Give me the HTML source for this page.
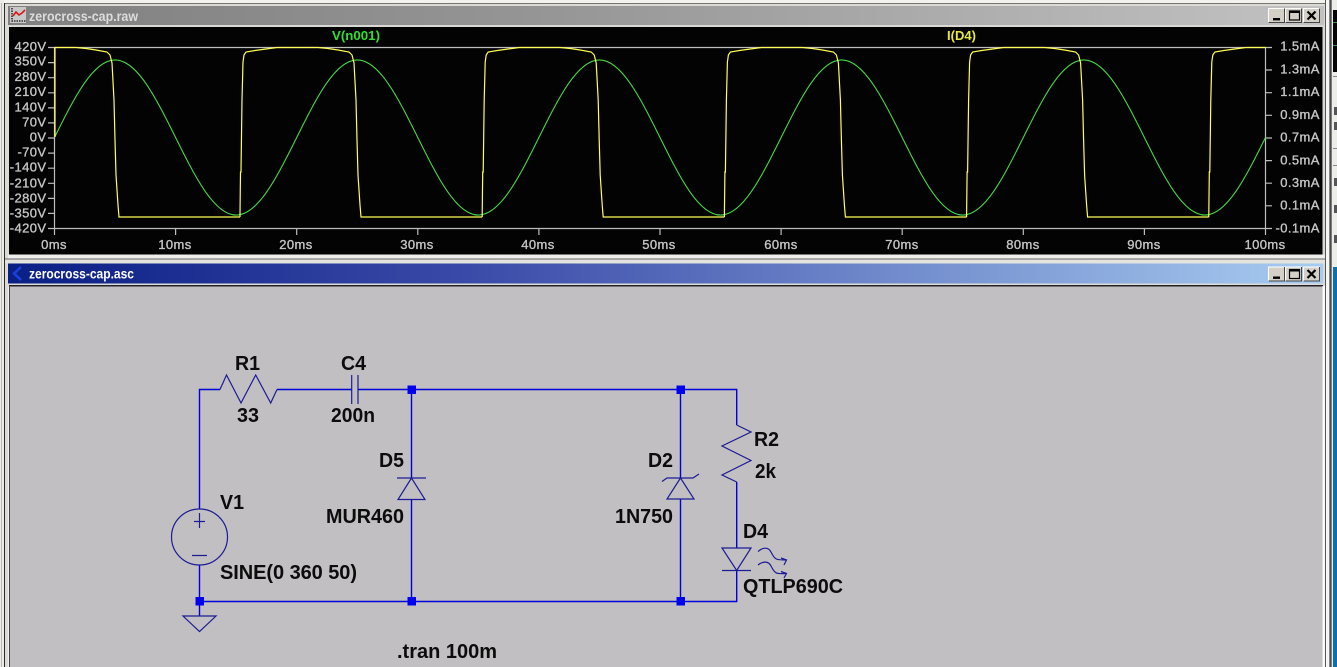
<!DOCTYPE html>
<html>
<head>
<meta charset="utf-8">
<style>
html,body{margin:0;padding:0;background:#d4d0c8;width:1337px;height:667px;overflow:hidden}
svg{display:block;position:absolute;left:0;top:0}
text{font-family:"Liberation Sans",Arial,sans-serif}
.ax{font-size:13px;fill:#c4c4c4;stroke:#c4c4c4;stroke-width:.35;letter-spacing:.4px}
.sc{font-size:20px;font-weight:bold;fill:#0c0c0c}
.w{fill:none;stroke:#0000d8;stroke-width:1.4}
.c{fill:none;stroke:#1c1c96;stroke-width:1.2}
.j{fill:#0000f0}
.g{fill:none;stroke:#bdbdbd;stroke-width:1.2}
</style>
</head>
<body>
<svg width="1337" height="667" viewBox="0 0 1337 667" xmlns="http://www.w3.org/2000/svg">
<defs>
<linearGradient id="tg1" x1="0" x2="1" y1="0" y2="0"><stop offset="0" stop-color="#808080"/><stop offset=".4" stop-color="#959595"/><stop offset="1" stop-color="#c2c2c2"/></linearGradient>
<linearGradient id="tg2" x1="0" x2="1" y1="0" y2="0"><stop offset="0" stop-color="#0a1f84"/><stop offset=".35" stop-color="#3a4aa8"/><stop offset="1" stop-color="#a8ccf0"/></linearGradient>
<clipPath id="pc"><rect x="54" y="30" width="1211.5" height="200"/></clipPath>
<g id="btns">
<g id="b1"><rect x="0.5" y="0.5" width="16" height="14" fill="#d4d0c8" stroke="#fff"/><path d="M16.5,0.5V14.5H0.5" fill="none" stroke="#444"/></g>
<use href="#b1" x="17"/><use href="#b1" x="35"/>
<rect x="5" y="10" width="7" height="2.4" fill="#000"/>
<rect x="21.5" y="3" width="10" height="9" fill="none" stroke="#000" stroke-width="1.2"/><rect x="21.5" y="3" width="10" height="2" fill="#000"/>
<path d="M39.5,3.5L47.5,11.5M47.5,3.5L39.5,11.5" stroke="#000" stroke-width="2.2"/>
</g>
<path id="yel" fill="none" stroke="#ffff55" stroke-width="1.2" d="M240,217L240,214L240.5,172L241,172L242,100L243,62L244,55L246,52L255,50.5L266,49L277,47.5L318,47.5L328,48.5L338,50L349,52L352,55L354,63L356,100L357,140L358,175L360,205L361,217L482.2,217"/>
</defs>

<!-- desktop edges -->
<rect x="0" y="0" width="1337" height="667" fill="#dcdad4"/>
<rect x="0" y="0" width="1337" height="3" fill="#f2f2ee"/>
<rect x="4" y="3" width="1326" height="1" fill="#77756f"/>
<rect x="4" y="3" width="1" height="664" fill="#2a2a2a"/>
<rect x="0" y="0" width="4" height="667" fill="#ecebe6"/>
<rect x="1" y="3" width="1" height="664" fill="#bbb"/>
<rect x="1325" y="0" width="1" height="667" fill="#555"/>
<rect x="1326" y="0" width="3" height="667" fill="#f6f6f4"/>
<rect x="1329" y="0" width="1.5" height="667" fill="#888"/>
<rect x="1330.5" y="0" width="1" height="667" fill="#111"/>
<rect x="1331.5" y="0" width="5.5" height="667" fill="#ecece8"/>
<rect x="1333" y="10" width="4" height="62" fill="#050505"/>
<rect x="1333" y="22" width="4" height="1" fill="#4a8a4a"/>
<rect x="1333" y="45" width="4" height="1" fill="#4a8a4a"/>
<rect x="1333" y="76" width="4" height="1" fill="#888"/>
<rect x="1333" y="148" width="4" height="1" fill="#888"/>
<rect x="1333" y="165" width="4" height="1" fill="#888"/>
<rect x="1334" y="107" width="3" height="8" fill="#555"/>
<rect x="1334" y="122" width="3" height="8" fill="#555"/>
<rect x="1334" y="178" width="3" height="8" fill="#555"/>
<rect x="1334" y="205" width="3" height="8" fill="#555"/>
<rect x="1334" y="235" width="3" height="8" fill="#555"/>
<rect x="1333" y="267" width="4" height="400" fill="#0f6eae"/>

<!-- plot window -->
<rect x="8" y="6" width="1316" height="20" fill="url(#tg1)"/>
<rect x="8" y="25" width="1316" height="2" fill="#d8d8d4"/>
<rect x="9" y="27" width="1313.5" height="227.5" fill="#030303"/>
<rect x="8" y="254.5" width="1317" height="4" fill="#eeeeea"/>
<rect x="5" y="258.5" width="1320" height="1" fill="#666"/>
<rect x="5" y="259.5" width="1320" height="4" fill="#e4e3de"/>

<!-- plot icon -->
<rect x="10" y="7" width="16" height="16" fill="#c8c8c8"/>
<path d="M12,8V21H26" fill="none" stroke="#111" stroke-width="1.3" stroke-dasharray="1.5 1"/>
<path d="M13,16L16,12L19,15L22,13L25,10" fill="none" stroke="#d81818" stroke-width="1.6"/>
<text x="29" y="21" font-size="14" font-weight="bold" fill="#dcdcdc" textLength="109" lengthAdjust="spacingAndGlyphs">zerocross-cap.raw</text>
<use href="#btns" x="1268" y="8"/>

<!-- axes -->
<path class="g" d="M54.5,47.5H1265.5V228.5H54.5Z"/>
<path class="g" d="M48,47.5H54M48,62.6H54M48,77.7H54M48,92.8H54M48,107.9H54M48,122.9H54M48,138H54M48,153.1H54M48,168.2H54M48,183.3H54M48,198.4H54M48,213.4H54M48,228.5H54"/>
<path class="g" d="M1265,47.5H1272M1265,70H1272M1265,92.7H1272M1265,115.3H1272M1265,138H1272M1265,160.6H1272M1265,183.2H1272M1265,205.8H1272M1265,228.5H1272"/>
<path class="g" d="M54.5,228V235M175.6,228V235M296.7,228V235M417.8,228V235M538.9,228V235M660,228V235M781.1,228V235M902.2,228V235M1023.3,228V235M1144.4,228V235M1265.5,228V235"/>

<g class="ax" text-anchor="end">
<text x="46.5" y="51">420V</text>
<text x="46.5" y="65.7">350V</text>
<text x="46.5" y="81">280V</text>
<text x="46.5" y="96">210V</text>
<text x="46.5" y="111.7">140V</text>
<text x="46.5" y="126.7">70V</text>
<text x="46.5" y="141.7">0V</text>
<text x="46.5" y="156.7">-70V</text>
<text x="46.5" y="171.7">-140V</text>
<text x="46.5" y="187.3">-210V</text>
<text x="46.5" y="202.7">-280V</text>
<text x="46.5" y="217.7">-350V</text>
<text x="46.5" y="232.7">-420V</text>
</g>
<g class="ax" text-anchor="end">
<text x="1319.8" y="50.7">1.5mA</text>
<text x="1319.8" y="73.5">1.3mA</text>
<text x="1319.8" y="96">1.1mA</text>
<text x="1319.8" y="119">0.9mA</text>
<text x="1319.8" y="141.7">0.7mA</text>
<text x="1319.8" y="164.3">0.5mA</text>
<text x="1319.8" y="187">0.3mA</text>
<text x="1319.8" y="209.7">0.1mA</text>
<text x="1319.8" y="232.7">-0.1mA</text>
</g>
<g class="ax" text-anchor="middle">
<text x="54" y="249">0ms</text>
<text x="175" y="249">10ms</text>
<text x="296" y="249">20ms</text>
<text x="417" y="249">30ms</text>
<text x="538" y="249">40ms</text>
<text x="659" y="249">50ms</text>
<text x="781" y="249">60ms</text>
<text x="902" y="249">70ms</text>
<text x="1023" y="249">80ms</text>
<text x="1144" y="249">90ms</text>
<text x="1265" y="249">100ms</text>
</g>
<text x="332" y="40" font-size="13" font-weight="bold" fill="#30e030" textLength="48" lengthAdjust="spacingAndGlyphs">V(n001)</text>
<text x="947" y="40" font-size="13" font-weight="bold" fill="#e8e840" textLength="29" lengthAdjust="spacingAndGlyphs">I(D4)</text>

<!-- traces -->
<g clip-path="url(#pc)">
<path fill="none" stroke="#48d848" stroke-width="1.1" d="M54.5,137.5
c19.75,-39.75 38.64,-77.6 60.55,-77.6 c21.91,0 40.8,37.85 60.55,77.6 c19.75,39.75 38.64,77.6 60.55,77.6 c21.91,0 40.8,-37.85 60.55,-77.6
c19.75,-39.75 38.64,-77.6 60.55,-77.6 c21.91,0 40.8,37.85 60.55,77.6 c19.75,39.75 38.64,77.6 60.55,77.6 c21.91,0 40.8,-37.85 60.55,-77.6
c19.75,-39.75 38.64,-77.6 60.55,-77.6 c21.91,0 40.8,37.85 60.55,77.6 c19.75,39.75 38.64,77.6 60.55,77.6 c21.91,0 40.8,-37.85 60.55,-77.6
c19.75,-39.75 38.64,-77.6 60.55,-77.6 c21.91,0 40.8,37.85 60.55,77.6 c19.75,39.75 38.64,77.6 60.55,77.6 c21.91,0 40.8,-37.85 60.55,-77.6
c19.75,-39.75 38.64,-77.6 60.55,-77.6 c21.91,0 40.8,37.85 60.55,77.6 c19.75,39.75 38.64,77.6 60.55,77.6 c21.91,0 40.8,-37.85 60.55,-77.6"/>
<path fill="none" stroke="#ffff55" stroke-width="1.2" d="M55,137L55,47.5L76,47.5L86,48.5L96,50L107,52L110,55L112,63L114,100L115,140L116,175L118,205L119,217L240,217"/>
<use href="#yel"/>
<use href="#yel" x="242.2"/>
<use href="#yel" x="484.4"/>
<use href="#yel" x="726.6"/>
<use href="#yel" x="968.8"/>
</g>

<!-- schematic window -->
<rect x="8" y="263.5" width="1315" height="20" fill="url(#tg2)"/>
<rect x="8" y="283.5" width="1315" height="2" fill="#dcdcdc"/>
<rect x="9" y="285" width="1314" height="1.5" fill="#222"/>
<rect x="8" y="286.5" width="2" height="381" fill="#f0f0f0"/>
<rect x="9" y="286" width="1" height="381" fill="#444"/>
<rect x="10" y="286.5" width="1312.5" height="381" fill="#c1bfc1"/>
<rect x="1322.5" y="286" width="2.5" height="381" fill="#fafafa"/>
<path d="M21,267L14,273.5L21,280" fill="none" stroke="#1a3fd8" stroke-width="2.6"/>
<text x="29" y="278.5" font-size="14" font-weight="bold" fill="#fff" textLength="105" lengthAdjust="spacingAndGlyphs">zerocross-cap.asc</text>
<use href="#btns" x="1268" y="266.5"/>

<!-- wires -->
<path class="w" d="M199.5,509V389.5H220M277,389.5H351.5M358,389.5H736.7V425M736.7,482V548M736.7,570V601.5H199.5M199.5,565V616M411.5,389.5V478M411.5,500V601.5M680.5,389.5V478M680.5,499V601.5"/>

<!-- components -->
<path class="c" d="M220,389.5L226.5,375L241,403L255.7,375L270.7,403L277,389.5"/>
<path class="c" d="M351.7,375V404M358,375V404"/>
<path class="c" d="M397,478H426M411.5,478L398,499.5H425Z"/>
<circle class="c" cx="199.5" cy="537" r="28"/>
<path class="c" d="M194,521.5H205M199.5,513V528M192,555.5H207"/>
<path class="c" d="M183,616H216L199.5,631.5Z"/>
<path class="c" d="M736.7,425L751,432L722,446L751,460.5L722,475L736.7,482"/>
<path class="c" d="M662,481.5L667,478H693L699,474M680.5,478L667,499H694Z"/>
<path class="c" d="M722,548H751L736.7,570.5ZM722,570.5H751"/>
<path class="c" stroke-width="1" d="M758,551.5C762,548 768,546 771,552C775,560 776,560 786.5,560M781,558L786.5,560L784,565"/>
<path class="c" stroke-width="1" d="M758,565C762,562 768,560 771,566C775,574 776,574 786.5,573.5M781,571.5L786.5,573.5L784,578"/>

<!-- junctions -->
<rect class="j" x="407.5" y="385.5" width="8.5" height="8.5"/>
<rect class="j" x="676.5" y="385.5" width="8.5" height="8.5"/>
<rect class="j" x="195.5" y="597" width="8.5" height="8.5"/>
<rect class="j" x="407.5" y="597" width="8.5" height="8.5"/>
<rect class="j" x="676.5" y="597" width="8.5" height="8.5"/>

<!-- labels -->
<g class="sc">
<text x="235" y="370" textLength="25" lengthAdjust="spacingAndGlyphs">R1</text>
<text x="237" y="422" textLength="22" lengthAdjust="spacingAndGlyphs">33</text>
<text x="341" y="370" textLength="25" lengthAdjust="spacingAndGlyphs">C4</text>
<text x="331" y="422" textLength="44" lengthAdjust="spacingAndGlyphs">200n</text>
<text x="379" y="467" textLength="25" lengthAdjust="spacingAndGlyphs">D5</text>
<text x="326" y="523" textLength="78" lengthAdjust="spacingAndGlyphs">MUR460</text>
<text x="220" y="509" textLength="24" lengthAdjust="spacingAndGlyphs">V1</text>
<text x="220" y="579" textLength="137">SINE(0 360 50)</text>
<text x="397" y="658" textLength="100">.tran 100m</text>
<text x="754" y="446" textLength="25" lengthAdjust="spacingAndGlyphs">R2</text>
<text x="755" y="478" textLength="21" lengthAdjust="spacingAndGlyphs">2k</text>
<text x="648" y="467" textLength="25" lengthAdjust="spacingAndGlyphs">D2</text>
<text x="615" y="523" textLength="58" lengthAdjust="spacingAndGlyphs">1N750</text>
<text x="743" y="538" textLength="25" lengthAdjust="spacingAndGlyphs">D4</text>
<text x="743" y="593" textLength="100" lengthAdjust="spacingAndGlyphs">QTLP690C</text>
</g>
</svg>
</body>
</html>
